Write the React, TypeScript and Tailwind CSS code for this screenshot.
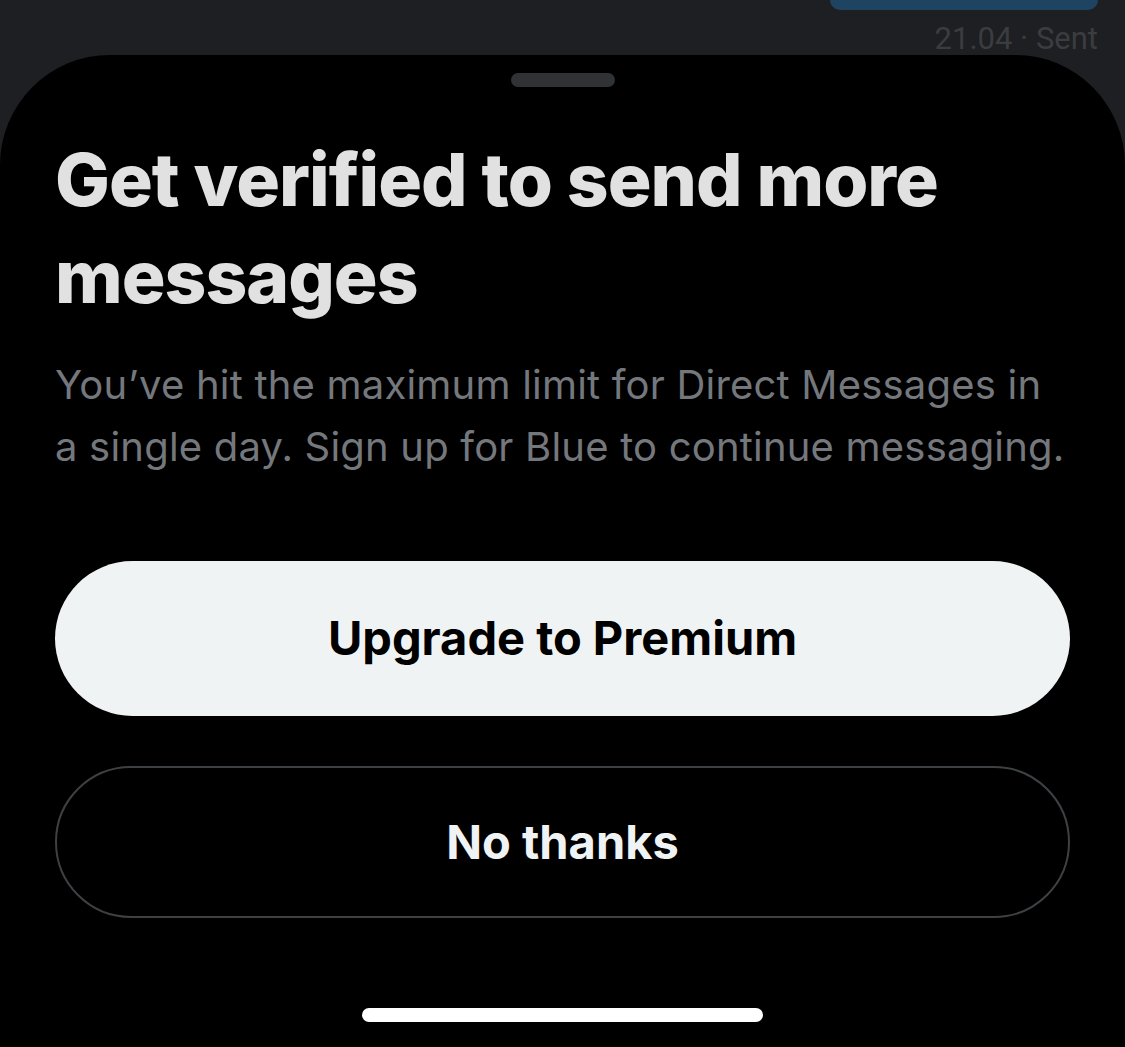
import React from "react";

export default function App() {
  return (
    <div className="w-[1125px] h-[1047px] bg-[#1e1f22] flex flex-col overflow-hidden" style={{ fontFamily: "Inter, 'Noto Sans', sans-serif" }}>
      <div className="h-[55px] flex flex-col items-end pr-[27px] shrink-0">
        <div className="w-[268px] h-[12px] bg-[#1e4461] rounded-b-[22px]" />
        <div className="mt-[13px] text-[31px] leading-[32px] text-[#3b3c40] tracking-[0px]" style={{ fontFamily: "Roboto, sans-serif" }}>
          21.04 · Sent
        </div>
      </div>
      <div className="flex-1 bg-black rounded-t-[110px] flex flex-col px-[55px]">
        <div className="flex justify-center pt-[18px]">
          <div className="w-[104px] h-[14px] rounded-full bg-[#2f3336]" />
        </div>
        <h1 className="mt-[44px] text-[#e1e1e1] font-extrabold text-[73px] leading-[97px] tracking-[-1px]">
          Get verified to send more messages
        </h1>
        <p className="mt-[29px] text-[#74787d] text-[40px] leading-[62px] tracking-[0.2px]">
          You’ve hit the maximum limit for Direct Messages in a single day. Sign up for Blue to continue messaging.
        </p>
        <button className="mt-[83px] h-[155px] w-full rounded-full bg-[#eff3f4] text-black font-bold text-[47px]">
          Upgrade to Premium
        </button>
        <button className="mt-[50px] h-[152px] w-full rounded-full border-2 border-[#3e4144] text-[#eff3f4] font-bold text-[47px]">
          No thanks
        </button>
        <div className="flex justify-center mt-[90px]">
          <div className="w-[401px] h-[14px] rounded-full bg-white" />
        </div>
      </div>
    </div>
  );
}
